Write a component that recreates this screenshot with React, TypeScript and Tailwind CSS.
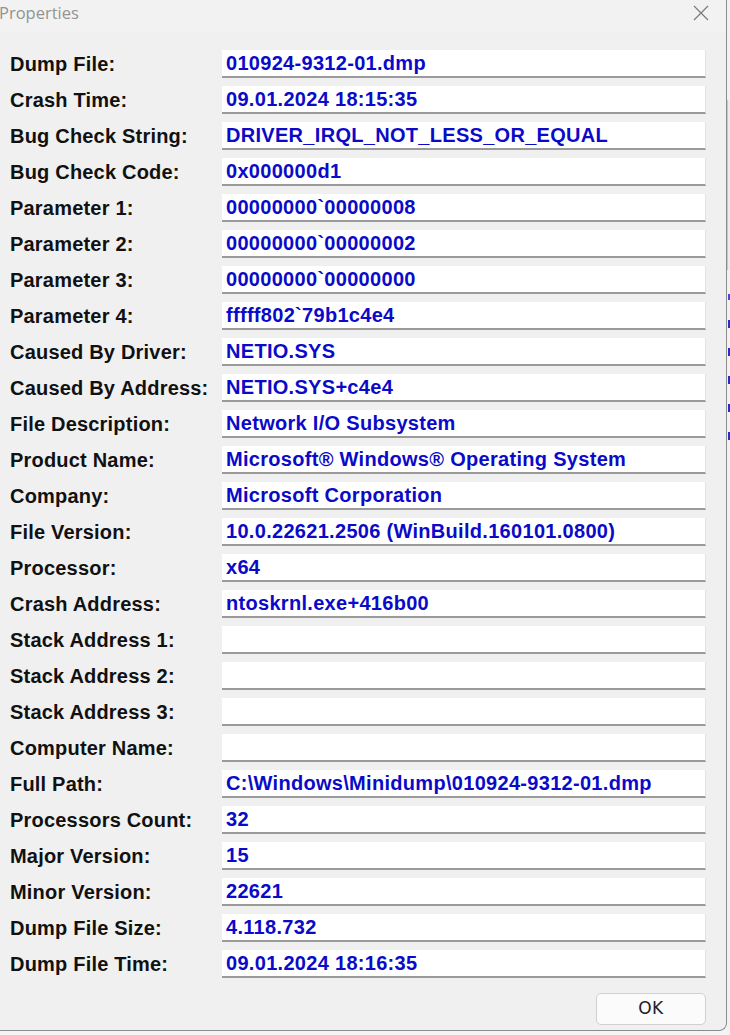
import React from "react";

const rows: [string, string][] = [
  ["Dump File:", "010924-9312-01.dmp"],
  ["Crash Time:", "09.01.2024 18:15:35"],
  ["Bug Check String:", "DRIVER_IRQL_NOT_LESS_OR_EQUAL"],
  ["Bug Check Code:", "0x000000d1"],
  ["Parameter 1:", "00000000`00000008"],
  ["Parameter 2:", "00000000`00000002"],
  ["Parameter 3:", "00000000`00000000"],
  ["Parameter 4:", "fffff802`79b1c4e4"],
  ["Caused By Driver:", "NETIO.SYS"],
  ["Caused By Address:", "NETIO.SYS+c4e4"],
  ["File Description:", "Network I/O Subsystem"],
  ["Product Name:", "Microsoft® Windows® Operating System"],
  ["Company:", "Microsoft Corporation"],
  ["File Version:", "10.0.22621.2506 (WinBuild.160101.0800)"],
  ["Processor:", "x64"],
  ["Crash Address:", "ntoskrnl.exe+416b00"],
  ["Stack Address 1:", ""],
  ["Stack Address 2:", ""],
  ["Stack Address 3:", ""],
  ["Computer Name:", ""],
  ["Full Path:", "C:\\Windows\\Minidump\\010924-9312-01.dmp"],
  ["Processors Count:", "32"],
  ["Major Version:", "15"],
  ["Minor Version:", "22621"],
  ["Dump File Size:", "4.118.732"],
  ["Dump File Time:", "09.01.2024 18:16:35"],
];

export default function App() {
  return (
    <div className="w-[730px] h-[1035px] flex bg-[#f4f4f4] overflow-hidden">
      <div className="w-[727px] h-[1031px] shrink-0 flex flex-col bg-[#f0f0f0] border-r border-b border-[#8c8c8c] rounded-br-[8px]">
        <div className="h-[32px] flex items-center justify-between bg-[#f2f2f2]">
          <span className="text-[16.5px] text-[#939393] -ml-[1px] -mt-[6px] font-['Open_Sans',sans-serif]">
            Properties
          </span>
          <svg width="18" height="18" viewBox="0 0 18 18" className="mr-[16px] -mt-[6px]">
            <path d="M2 2 L16 16 M16 2 L2 16" stroke="#7a7a7a" strokeWidth="1.2" fill="none" />
          </svg>
        </div>
        <div className="pt-[18px] flex flex-col gap-[8px] font-['Liberation_Sans',Arial,sans-serif] font-bold text-[20px]">
          {rows.map(([label, value]) => (
            <div key={label} className="h-[28px] flex items-center">
              <div className="w-[222px] pl-[10px] text-[#111] leading-none tracking-[0.2px]">{label}</div>
              <div className="w-[484px] h-[28px] bg-white border-b-2 border-b-[#9a9a9a] border-r border-r-[#e2e2e2] flex items-center pl-[4px] text-[#0a0ac8] leading-none tracking-[0.3px] whitespace-nowrap overflow-hidden">
                {value}
              </div>
            </div>
          ))}
        </div>
        <div className="flex justify-end mt-[15px] pr-[20px]">
          <button className="w-[110px] h-[32px] rounded-[5px] border border-[#d0d0d0] bg-[#fbfbfb] text-[17px] text-[#222] font-['DejaVu_Sans',sans-serif] tracking-[0.5px]">
            OK
          </button>
        </div>
      </div>
      <div className="w-[3px] shrink-0 flex flex-col bg-[#f2f2f2]">
        <div className="h-[100px]" />
        <div className="h-[170px] border-l border-[#c8c8c8] bg-[#ebebeb]" />
        <div className="h-[24px]" />
        <div className="flex flex-col gap-[20px] pl-[1px]">
          <span className="block w-[2px] h-[6px] bg-[#4848d8]" />
          <span className="block w-[2px] h-[8px] bg-[#2a2ad0]" />
          <span className="block w-[2px] h-[8px] bg-[#2a2ad0]" />
          <span className="block w-[2px] h-[8px] bg-[#2a2ad0]" />
          <span className="block w-[2px] h-[8px] bg-[#2a2ad0]" />
          <span className="block w-[2px] h-[8px] bg-[#2a2ad0]" />
        </div>
      </div>
    </div>
  );
}
